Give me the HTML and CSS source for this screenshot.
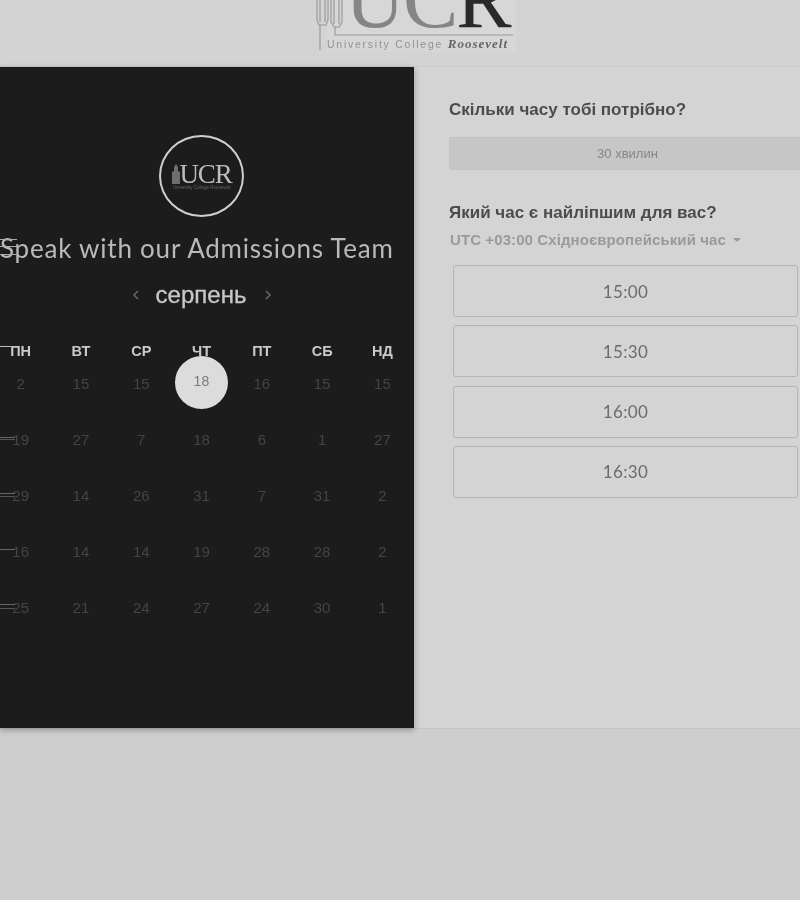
FILE: index.html
```html
<!DOCTYPE html>
<html lang="uk">
<head>
  <meta charset="UTF-8" />
  <meta name="viewport" content="width=device-width, initial-scale=1.0"/>
  <title>Speak with our Admissions Team</title>
  <link rel="stylesheet" href="styles.css">
</head>
<body>
  <div class="page">
    <header class="top">
      <div class="logo">
        <svg class="logo-art" width="200" height="52" viewBox="0 0 200 52" fill="none" stroke="#9a9a9a" stroke-width="1.2">
          <path d="M1 0V20L3 25H10L12 20V0M4 0V22M9 0V22"/>
          <path d="M15 0V22L18 27H23L26 22V0M18 0V24M23 0V24"/>
          <path d="M4 25V50"/>
          <path d="M19 27V35H197"/>
        </svg>
        <div class="logo-text">
          <div class="logo-big"><span class="uc">UC</span><span class="r">R</span></div>
          <div class="logo-small">University College <b>Roosevelt</b></div>
        </div>
      </div>
    </header>

    <main class="card">
      <section class="left">
        <div class="badge">
          <div class="badge-inner">
            <svg width="8" height="20" viewBox="0 0 8 20" fill="#6e6e6e"><path d="M0 20V8L2 7V3L4 0 6 3V7L8 8V20Z"/></svg>
            <span>UCR</span>
          </div>
          <div class="badge-sub">University College Roosevelt</div>
        </div>
        <h1 class="title">Speak with our Admissions Team</h1>
        <div class="month">
          <svg class="chev" width="8" height="10" viewBox="0 0 8 10" fill="none" stroke="#666" stroke-width="1.6"><path d="M6 1 2 5 6 9"/></svg>
          <span>серпень</span>
          <svg class="chev" width="8" height="10" viewBox="0 0 8 10" fill="none" stroke="#666" stroke-width="1.6"><path d="M2 1 6 5 2 9"/></svg>
        </div>
        <div class="calendar">
          <div class="head">ПН</div><div class="head">ВТ</div><div class="head">СР</div><div class="head">ЧТ</div><div class="head">ПТ</div><div class="head">СБ</div><div class="head">НД</div>
          <div class="day">2</div><div class="day">15</div><div class="day">15</div><div class="day selected"><span>18</span></div><div class="day">16</div><div class="day">15</div><div class="day">15</div>
          <div class="day">19</div><div class="day">27</div><div class="day">7</div><div class="day">18</div><div class="day">6</div><div class="day">1</div><div class="day">27</div>
          <div class="day">29</div><div class="day">14</div><div class="day">26</div><div class="day">31</div><div class="day">7</div><div class="day">31</div><div class="day">2</div>
          <div class="day">16</div><div class="day">14</div><div class="day">14</div><div class="day">19</div><div class="day">28</div><div class="day">28</div><div class="day">2</div>
          <div class="day">25</div><div class="day">21</div><div class="day">24</div><div class="day">27</div><div class="day">24</div><div class="day">30</div><div class="day">1</div>
        </div>
        <i class="mark mark-s"></i>
        <i class="mark mark-1"></i>
        <i class="mark mark-2"></i>
        <i class="mark mark-3"></i>
        <i class="mark mark-4"></i>
        <i class="mark mark-5"></i>
      </section>

      <section class="right">
        <h2>Скільки часу тобі потрібно?</h2>
        <div class="duration">30 хвилин</div>
        <h2 class="second">Який час є найліпшим для вас?</h2>
        <div class="zone">UTC +03:00 Східноєвропейський час <i class="caret"></i></div>
        <div class="slots">
          <button class="slot">15:00</button>
          <button class="slot">15:30</button>
          <button class="slot">16:00</button>
          <button class="slot">16:30</button>
        </div>
      </section>
    </main>
  </div>
</body>
</html>
```

FILE: styles.css
```css
* {
  margin: 0;
  padding: 0;
  box-sizing: border-box;
}

body, html {
  width: 100%;
  height: 100%;
  overflow: hidden;
  font-family: 'Liberation Sans', Arial, sans-serif;
  background-color: #cfcfcf;
}

.page {
  width: 800px;
  height: 900px;
  filter: blur(0.5px);
  background-color: #cecece;
}

/* top logo, cropped by the window */
.top {
  height: 67px;
  padding-left: 316px;
  overflow: hidden;
  background-color: #d3d3d3;
  border-bottom: 1px solid #cbcbcb;
}

.logo {
  position: relative;
  width: 200px;
  height: 52px;
  padding-left: 11px;
}

.logo-art {
  position: absolute;
  left: 0;
  top: 0;
}

.logo-text {
  height: 52px;
  overflow: hidden;
  background-color: #d7d7d7;
}

.logo-big {
  font-family: 'Liberation Serif', serif;
  font-size: 83px;
  line-height: 60px;
  margin-top: -31px;
  height: 66px;
  margin-left: 18px;
  letter-spacing: -2px;
  white-space: nowrap;
}

.logo-big .uc { color: #858585; }
.logo-big .r { color: #2a2a2a; }

.logo-small {
  font-size: 10.5px;
  line-height: 12px;
  letter-spacing: 1.75px;
  color: #929292;
  margin-top: 3px;
  white-space: nowrap;
}

.logo-small b {
  font-family: 'Liberation Serif', serif;
  font-style: italic;
  color: #666;
  font-size: 13px;
  letter-spacing: 1px;
}

.card {
  height: 662px;
  display: flex;
  border-bottom: 1px solid #c4c4c4;
}

.left {
  position: relative;
  width: 414px;
  flex: none;
  background-color: #1c1c1c;
  overflow: hidden;
  padding-top: 68px;
  box-shadow: 0 2px 6px rgba(0, 0, 0, .3);
}

.badge {
  width: 85px;
  height: 82px;
  margin-left: 159px;
  border: 2.5px solid #cfcfcf;
  border-radius: 50%;
  display: flex;
  flex-direction: column;
  align-items: center;
  justify-content: center;
}

.badge-inner {
  display: flex;
  align-items: center;
  color: #bdbdbd;
  font-family: 'Liberation Serif', serif;
  font-size: 27px;
  line-height: 24px;
  letter-spacing: -1.2px;
}

.badge-sub {
  font-size: 4.5px;
  color: #666;
  white-space: nowrap;
  margin-top: -1px;
}

.title {
  font-family: Lato, sans-serif;
  font-weight: 400;
  font-size: 26px;
  line-height: 32px;
  color: #b9b9b9;
  white-space: nowrap;
  margin-top: 15px;
  letter-spacing: .78px;
}

.month {
  display: flex;
  align-items: center;
  justify-content: center;
  margin-top: 17px;
  margin-left: -10px;
  height: 28px;
  font-size: 24px;
  color: #c8c8c8;
  -webkit-text-stroke: .3px #c8c8c8;
}

.month span {
  margin: 0 18px 0 16px;
}

.calendar {
  display: grid;
  grid-template-columns: repeat(7, 60.3px);
  grid-template-rows: 24px repeat(5, 56px);
  margin-top: 30px;
  margin-left: -9.5px;
  text-align: center;
}

.head {
  font-size: 14.5px;
  font-weight: bold;
  color: #cacaca;
  line-height: 24px;
}

.day {
  font-size: 15px;
  color: #444;
  line-height: 42px;
}

.day.selected {
  position: relative;
}

.day.selected span {
  position: absolute;
  left: 3.5px;
  top: -7px;
  width: 53px;
  height: 53px;
  line-height: 50px;
  font-size: 14px;
  border-radius: 50%;
  background-color: #dcdcdc;
  color: #7a7a7a;
}

/* thin leftover lines along the cropped left edge */
.mark {
  position: absolute;
  left: 0;
  width: 15px;
  height: 4px;
  border-top: 1px solid #666;
  border-bottom: 1px solid #555;
}

.mark-s {
  top: 172px;
  height: 16px;
  width: 17px;
  border-color: #aaa;
  background: linear-gradient(transparent 6px, #aaa 6px, #aaa 7px, transparent 7px);
}
.mark-1 { top: 279px; height: 2px; border-bottom: 0; border-color: #bbb; }
.mark-2 { top: 370px; height: 3px; }
.mark-3 { top: 426px; }
.mark-4 { top: 482px; height: 2px; border-bottom: 0; }
.mark-5 { top: 537px; height: 5px; }

.right {
  flex: 1;
  background-color: #d4d4d4;
  padding: 33px 0 0 35px;
  overflow: hidden;
}

.right h2 {
  font-size: 17px;
  line-height: 20px;
  font-weight: bold;
  color: #4c4c4c;
  white-space: nowrap;
}

.duration {
  width: 356px;
  height: 33px;
  margin-top: 17px;
  border-radius: 3px 0 0 3px;
  background-color: #c6c6c6;
  border: 1px solid #c2c2c2;
  border-right: 0;
  font-size: 13px;
  line-height: 31px;
  text-align: center;
  color: #858585;
}

.right h2.second {
  margin-top: 33px;
}

.zone {
  display: flex;
  align-items: center;
  gap: 7px;
  margin-top: 8px;
  margin-left: 1px;
  font-size: 15px;
  line-height: 18px;
  font-weight: bold;
  letter-spacing: .09px;
  color: #9a9a9a;
  white-space: nowrap;
}

.caret {
  width: 0;
  height: 0;
  border-left: 4px solid transparent;
  border-right: 4px solid transparent;
  border-top: 4px solid #9a9a9a;
}

.slots {
  display: flex;
  flex-direction: column;
  gap: 8.3px;
  margin: 16px 0 0 4px;
}

.slot {
  width: 345px;
  height: 52px;
  background: transparent;
  border: 1px solid #b4b4b4;
  border-radius: 3px;
  font-family: Lato, sans-serif;
  font-size: 17px;
  letter-spacing: .4px;
  color: #6c6c6c;
}
```
